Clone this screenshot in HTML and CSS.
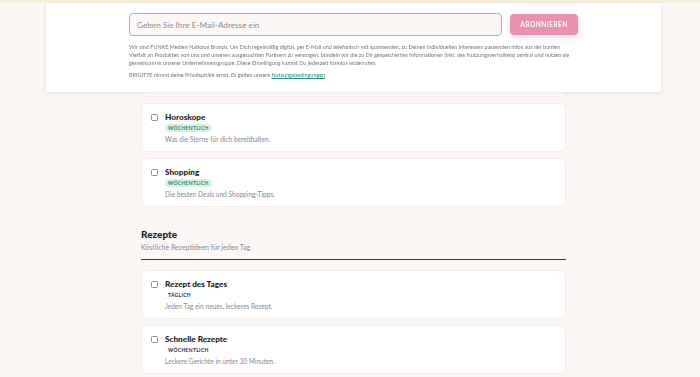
FILE: index.html
```html
<!DOCTYPE html>
<html lang="de">
<head>
  <meta charset="UTF-8" />
  <title>Newsletter</title>
  <link rel="stylesheet" href="styles.css">
</head>
<body>
  <div class="topbar"></div>

  <!-- Sticky newsletter signup -->
  <div class="signup">
    <form class="signup-row" onsubmit="return false">
      <input type="email" placeholder="Geben Sie Ihre E-Mail-Adresse ein">
      <button type="submit">Abonnieren</button>
    </form>
    <p class="legal">Wir sind FUNKE Medien National Brands. Um Dich regelmäßig digital, per E-Mail und telefonisch mit spannenden, zu Deinen individuellen Interessen passenden Infos aus der bunten Vielfalt an Produkten von uns und unseren ausgesuchten Partnern zu versorgen, bündeln wir die zu Dir gespeicherten Informationen (inkl. des Nutzungsverhaltens) zentral und nutzen sie gemeinsam in unserer Unternehmensgruppe. Diese Einwilligung kannst Du jederzeit formlos widerrufen.</p>
    <p class="legal">BRIGITTE nimmt deine Privatsphäre ernst. Es gelten unsere <a href="#">Nutzungsbedingungen</a>.</p>
  </div>

  <main class="list">
    <div class="group">
      <!-- card scrolled under the signup panel -->
      <div class="peek"></div>
      <label class="item">
        <input type="checkbox">
        <div class="item-body">
          <h4>Horoskope</h4>
          <span class="badge green">Wöchentlich</span>
          <p>Was die Sterne für dich bereithalten.</p>
        </div>
      </label>
      <label class="item">
        <input type="checkbox">
        <div class="item-body">
          <h4>Shopping</h4>
          <span class="badge green">Wöchentlich</span>
          <p>Die besten Deals und Shopping-Tipps.</p>
        </div>
      </label>
    </div>

    <section class="section">
      <h2>Rezepte</h2>
      <p class="sub">Köstliche Rezeptideen für jeden Tag</p>
    </section>

    <div class="group">
      <label class="item">
        <input type="checkbox">
        <div class="item-body">
          <h4>Rezept des Tages</h4>
          <span class="badge plain">Täglich</span>
          <p>Jeden Tag ein neues, leckeres Rezept.</p>
        </div>
      </label>
      <label class="item">
        <input type="checkbox">
        <div class="item-body">
          <h4>Schnelle Rezepte</h4>
          <span class="badge plain">Wöchentlich</span>
          <p>Leckere Gerichte in unter 30 Minuten.</p>
        </div>
      </label>
    </div>
  </main>
</body>
</html>
```

FILE: styles.css
```css
:root {
  --bg: #fcf7f4;
  --teal: #7fc5bb;
  --pink: #ea92ad;
  --text: #1c1c22;
  --muted: #8a8890;
}

body {
  margin: 0;
  font-family: 'Lato', 'Noto Sans', sans-serif;
  background: var(--bg);
  color: var(--text);
  overflow: hidden;
}

.topbar {
  height: 3px;
  background: #f8efdf;
}

/* Newsletter panel stays on top of the list */
.signup {
  position: fixed;
  top: 3px;
  left: 46px;
  width: 449px;
  height: 89px;
  padding: 0 83px;
  background: #fff;
  box-shadow: 0 1px 4px rgba(120, 100, 90, 0.18);
  z-index: 2;
}

.signup-row {
  display: flex;
  gap: 8px;
  margin: 10px 0 0;
}

.signup-row input {
  flex: 1;
  height: 23px;
  box-sizing: border-box;
  padding: 0 7px;
  border: 1.5px solid var(--teal);
  border-radius: 4px;
  background: #fdf8f5;
  font-family: inherit;
  font-size: 8.2px;
  color: var(--text);
  outline: none;
}

.signup-row input::placeholder {
  color: #8f8c92;
}

.signup-row button {
  width: 68px;
  height: 21px;
  margin-top: 1px;
  border: none;
  border-radius: 4px;
  background: var(--pink);
  color: #fff;
  font-family: inherit;
  font-size: 6.5px;
  font-weight: 700;
  letter-spacing: 0.5px;
  text-transform: uppercase;
  box-shadow: 0 2px 6px rgba(234, 146, 173, 0.35);
  cursor: pointer;
}

.legal {
  margin: 7px 0 0;
  font-size: 5.45px;
  line-height: 8px;
  color: #77747a;
}

.legal + .legal {
  margin-top: 4px;
}

.legal a {
  color: #2a8d84;
}

.list {
  width: 425px;
  margin: 45px 0 0 141px;
}

.group {
  display: flex;
  flex-direction: column;
  gap: 6px;
}

.peek {
  height: 49px;
  box-sizing: border-box;
  background: #fff;
  border: 1px solid #f5eeea;
  border-radius: 6px;
}

.item {
  display: flex;
  gap: 7px;
  height: 49px;
  box-sizing: border-box;
  padding: 8px 9px 0;
  background: #fff;
  border: 1px solid #f5eeea;
  border-radius: 6px;
  cursor: pointer;
}

.item input {
  flex: none;
  width: 7px;
  height: 7px;
  margin: 2px 0 0;
  appearance: none;
  border: 1px solid #8d8b90;
  border-radius: 1.5px;
  background: #fff;
}

.item-body {
  display: flex;
  flex-direction: column;
  align-items: flex-start;
}

.item h4 {
  margin: 0;
  font-size: 8.2px;
  font-weight: 900;
  line-height: 10px;
}

.badge {
  margin-top: 2px;
  padding: 0 3px;
  font-size: 5px;
  font-weight: 700;
  line-height: 8px;
  letter-spacing: 0.3px;
  text-transform: uppercase;
  border-radius: 4px;
}

.badge.green {
  background: #d9efe2;
  color: #2b8c67;
}

.badge.plain {
  color: #2a2a33;
}

.item p {
  margin: 3px 0 0;
  font-size: 6.6px;
  line-height: 9px;
  color: var(--muted);
}

.section {
  padding: 21px 0 8px;
  margin-bottom: 10px;
  border-bottom: 1.5px solid #3b3a44;
}

.section h2 {
  margin: 0;
  font-size: 10px;
  font-weight: 900;
}

.sub {
  margin: 3px 0 0;
  font-size: 7px;
  color: var(--muted);
}
```
